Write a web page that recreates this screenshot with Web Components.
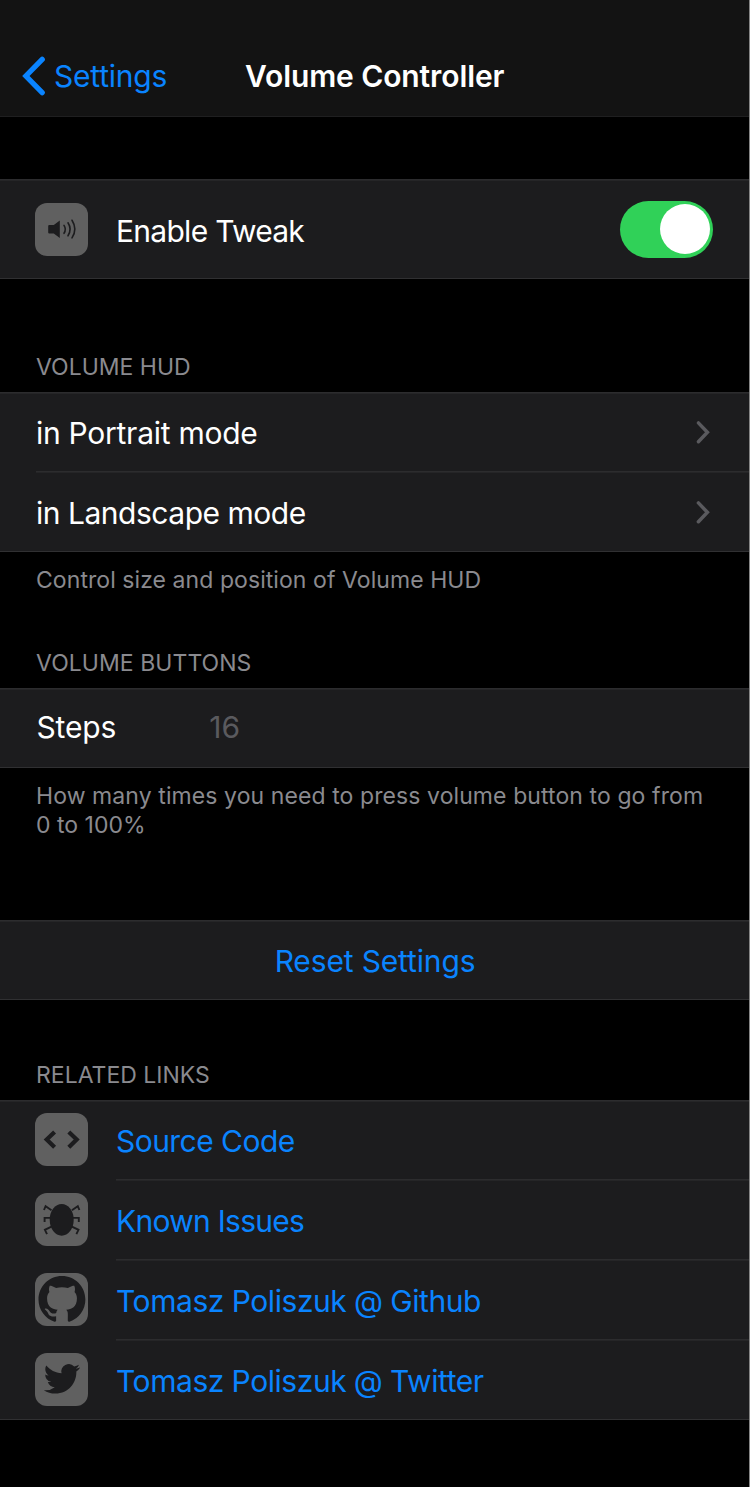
<!DOCTYPE html>
<html lang="en">
<head>
<meta charset="utf-8">
<title>Volume Controller</title>
<style>
html,body{margin:0;background:#000}
body{width:750px;height:1487px;overflow:hidden;font-family:Inter,"Liberation Sans",sans-serif;font-size:30px;color:#fff}
</style>
</head>
<body>
<settings-page>
  <nav-bar slot="nav"><fit-text slot="back" style="letter-spacing:-.22px">Settings</fit-text><fit-text style="letter-spacing:-.1px">Volume Controller</fit-text></nav-bar>
  <settings-group style="--gap:62px">
    <settings-row tall icon="speaker"><fit-text style="letter-spacing:-.72px">Enable Tweak</fit-text><toggle-switch slot="end"></toggle-switch></settings-row>
  </settings-group>
  <settings-group style="--gap:71px">
    <fit-text slot="header">VOLUME HUD</fit-text>
    <settings-row arrow><fit-text style="letter-spacing:-.27px">in Portrait mode</fit-text></settings-row>
    <settings-row arrow><fit-text style="letter-spacing:-.48px">in Landscape mode</fit-text></settings-row>
    <fit-text slot="footer" style="letter-spacing:.065px">Control size and position of Volume HUD</fit-text>
  </settings-group>
  <settings-group style="--gap:51px">
    <fit-text slot="header" style="letter-spacing:.05px">VOLUME BUTTONS</fit-text>
    <settings-row field><fit-text style="letter-spacing:-.15px">Steps</fit-text><fit-text slot="value">16</fit-text></settings-row>
    <div slot="footer"><fit-text style="letter-spacing:.09px">How many times you need to press volume button to go from</fit-text><br><fit-text>0 to 100%</fit-text></div>
  </settings-group>
  <settings-group style="--gap:80px">
    <settings-row link center><fit-text style="letter-spacing:-.15px">Reset Settings</fit-text></settings-row>
  </settings-group>
  <settings-group style="--gap:58px">
    <fit-text slot="header">RELATED LINKS</fit-text>
    <settings-row link icon="code"><fit-text style="letter-spacing:-.54px">Source Code</fit-text></settings-row>
    <settings-row link icon="bug"><fit-text style="letter-spacing:-.72px">Known Issues</fit-text></settings-row>
    <settings-row link icon="github"><fit-text style="letter-spacing:-.42px;word-spacing:-.4px">Tomasz Poliszuk @ Github</fit-text></settings-row>
    <settings-row link icon="twitter"><fit-text style="letter-spacing:-.43px;word-spacing:-.4px">Tomasz Poliszuk @ Twitter</fit-text></settings-row>
  </settings-group>
</settings-page>
<script>
const define=(name,html,setup)=>customElements.define(name,class extends HTMLElement{
  constructor(){super();this.attachShadow({mode:'open'}).innerHTML=html;}
  connectedCallback(){if(setup)setup(this,this.shadowRoot);}
});
define('fit-text',`<style>:host{display:inline-block;white-space:nowrap}</style><slot></slot>`);
define('settings-page',`<style>:host{display:flex;flex-direction:column;box-sizing:border-box;height:1487px;border-right:1px solid #858585;background:#000}</style><slot name="nav"></slot><slot></slot>`);
define('nav-bar',`<style>
:host{display:grid;grid-template-columns:245px 1fr;align-items:end;box-sizing:border-box;height:117px;padding-bottom:19px;background:#131313;border-bottom:1px solid #1f1f20;line-height:42px}
.back{display:flex;align-items:center;color:#0a84ff;gap:8px;padding-left:22px}
.title{font-weight:600}
svg{display:block}
</style><div class="back"><svg width="24" height="40" viewBox="0 0 24 40"><path d="M20.2 3.4 3.9 20 20.2 36.6" fill="none" stroke="#0a84ff" stroke-width="5.3" stroke-linecap="round" stroke-linejoin="miter"/></svg><slot name="back"></slot></div><div class="title"><slot></slot></div>`);
define('settings-group',`<style>
:host{display:block;margin-top:var(--gap)}
.rows{background:#1c1c1e;border-top:1px solid #2c2c2e;border-bottom:1px solid #303032;box-shadow:inset 0 1px #252527}
.head,.foot{font-size:23px;color:#8a8a8f;padding:0 36px;line-height:29px}
.head{box-sizing:border-box;height:42px;padding-top:3px}.foot{padding-top:14px}
.head[hidden],.foot[hidden]{display:none}
</style><div class="head"><slot name="header"></slot></div><div class="rows"><slot></slot></div><div class="foot"><slot name="footer"></slot></div>`,(el,r)=>{
  r.querySelector('.head').hidden=!el.querySelector('[slot=header]');
  r.querySelector('.foot').hidden=!el.querySelector('[slot=footer]');
});
const ICONS={
speaker:'<path d="M13.2 22.9q0-1 1-1h4.6l6-4.4V35l-6-4.5h-4.6q-1 0-1-1z" fill="#1c1c1e"/><path d="M29 22.4q2.6 3.9 0 7.9M33 19.8q4.2 6.5 0 13M37 17.3q5.7 9 0 17.6" fill="none" stroke="#1c1c1e" stroke-width="1.6" stroke-linecap="round"/>',
code:'<path d="M19.6 19 11.7 26.6l7.9 7.7M33.8 19l7.9 7.6-7.9 7.7" fill="none" stroke="#1c1c1e" stroke-width="4.2"/>',
bug:'<ellipse cx="26.7" cy="26.8" rx="12" ry="15.9" fill="#1c1c1e"/><path d="M16.5 17.2 10.6 13.1 9 17M15.5 24.9H9.6v4M16.5 33.6l-6.6 3.2 2.1 4.4M36.9 17.2l5.9-4.1 1.6 3.9M37.9 24.9h5.9v4M36.9 33.6l6.6 3.2-2.1 4.4" fill="none" stroke="#1c1c1e" stroke-width="1.9"/>',
github:'<g transform="translate(3.5 3) scale(2.93)"><path fill="#1c1c1e" d="M8 0C3.58 0 0 3.58 0 8c0 3.54 2.29 6.53 5.47 7.59.4.07.55-.17.55-.38 0-.19-.01-.82-.01-1.49-2.01.37-2.53-.49-2.69-.94-.09-.23-.48-.94-.82-1.13-.28-.15-.68-.52-.01-.53.63-.01 1.08.58 1.23.82.72 1.21 1.87.87 2.33.66.07-.52.28-.87.51-1.07-1.78-.2-3.64-.89-3.64-3.95 0-.87.31-1.59.82-2.15-.08-.2-.36-1.02.08-2.12 0 0 .67-.21 2.2.82.64-.18 1.32-.27 2-.27s1.36.09 2 .27c1.53-1.04 2.2-.82 2.2-.82.44 1.1.16 1.92.08 2.12.51.56.82 1.27.82 2.15 0 3.07-1.87 3.75-3.65 3.95.29.25.54.73.54 1.48 0 1.07-.01 1.93-.01 2.2 0 .21.15.46.55.38A8.01 8.01 0 0 0 16 8c0-4.42-3.58-8-8-8z"/></g>',
twitter:'<g transform="translate(8.8 7.7) scale(1.51)"><path fill="#1c1c1e" d="M23.953 4.57a10 10 0 0 1-2.825.775 4.958 4.958 0 0 0 2.163-2.723c-.951.555-2.005.959-3.127 1.184a4.92 4.92 0 0 0-8.384 4.482C7.69 8.095 4.067 6.13 1.64 3.162a4.822 4.822 0 0 0-.666 2.475c0 1.71.87 3.213 2.188 4.096a4.904 4.904 0 0 1-2.228-.616v.06a4.923 4.923 0 0 0 3.946 4.827 4.996 4.996 0 0 1-2.212.085 4.936 4.936 0 0 0 4.604 3.417 9.867 9.867 0 0 1-6.102 2.105c-.39 0-.779-.023-1.17-.067a13.995 13.995 0 0 0 7.557 2.209c9.053 0 13.998-7.496 13.998-13.985 0-.21 0-.42-.015-.63A9.935 9.935 0 0 0 24 4.59z"/></g>'
};
define('app-icon',`<style>:host{display:block;width:53px;height:53px;flex:none}svg{display:block}</style><svg width="53" height="53" viewBox="0 0 53 53"><rect width="53" height="53" rx="12" fill="#606060"/><g></g></svg>`,(el,r)=>{r.querySelector('g').innerHTML=ICONS[el.getAttribute('name')];});
define('toggle-switch',`<style>:host{display:flex;justify-content:flex-end;align-items:center;box-sizing:border-box;width:93px;height:57px;border-radius:29px;background:#30d158;padding:0 3px 1px}i{display:block;width:50px;height:50px;border-radius:50%;background:#fff}</style><i></i>`);
define('settings-row',`<style>
:host{display:flex;align-items:center;padding-left:36px;box-sizing:border-box;line-height:38px}
.body{flex:1;display:flex;align-items:center;box-sizing:border-box;height:80px;padding:0 36px 0 0;border-top:1px solid transparent}
:host(:not(:first-of-type)) .body{border-top-color:#2c2c2e;box-shadow:inset 0 1px #252527}
:host(:first-of-type) .body{height:78px;border-top:0}
:host([tall]:first-of-type) .body{height:98px}
:host([link]){color:#0a84ff}
:host([center]){padding:0 0 0 1px}:host([center]) .body{padding:0;justify-content:center}
app-icon{align-self:flex-start;margin:14px 28px 0 -1px}
:host(:first-of-type) app-icon{margin-top:12px}
:host([tall]:first-of-type) app-icon{margin-top:23px}
.label{padding-top:2px}
:host([tall]) .label{padding-top:4px}
:host([field]) .body{padding-bottom:2px}
:host([field]) .label{padding:0 0 0 .5px}
.value{color:#5a5a5e;padding-left:93px}
.end{margin-left:auto;display:flex;align-items:center}
.end svg{margin-right:2px}
</style><div class="body"><span class="label"><slot></slot></span><span class="value"><slot name="value"></slot></span><span class="end"><slot name="end"></slot></span></div>`,(el,r)=>{
  if(el.hasAttribute('icon')){const i=document.createElement('app-icon');i.setAttribute('name',el.getAttribute('icon'));r.querySelector('.body').before(i);}
  if(!el.querySelector('[slot=value]'))r.querySelector('.value').remove();
  if(el.hasAttribute('center'))r.querySelector('.end').remove();
  if(el.hasAttribute('arrow'))r.querySelector('.end').innerHTML='<svg width="17" height="26" viewBox="0 0 17 26"><path d="M4.4 3.9 13.4 13.3 4.4 22.7" fill="none" stroke="#5a5a5e" stroke-width="3.5" stroke-linecap="round"/></svg>';
});
</script>
</body>
</html>
